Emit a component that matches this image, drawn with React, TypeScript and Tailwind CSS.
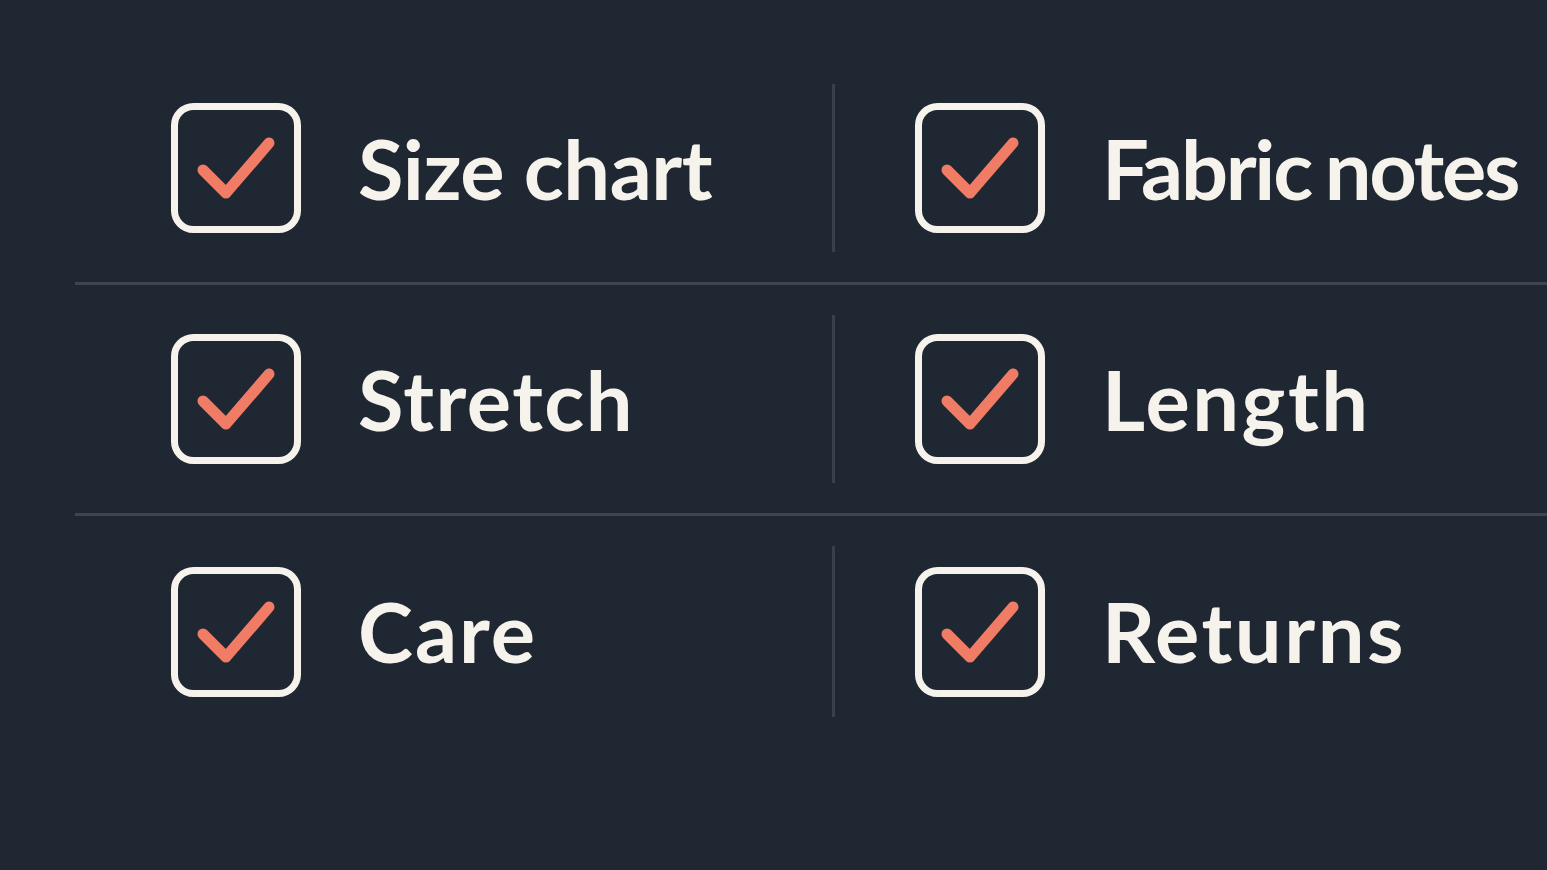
const items = [
  [
    { label: "Size chart", track: "-0.5px", words: "0px" },
    { label: "Fabric notes", track: "-2.3px", words: "-4px" },
  ],
  [
    { label: "Stretch", track: "1.5px", words: "0px" },
    { label: "Length", track: "2.5px", words: "0px" },
  ],
  [
    { label: "Care", track: "2px", words: "0px" },
    { label: "Returns", track: "2.5px", words: "0px" },
  ],
];

function CheckBox() {
  return (
    <svg width="130" height="130" viewBox="0 0 130 130" className="shrink-0">
      <rect x="3.5" y="3.5" width="123" height="123" rx="19" fill="none" stroke="#f6f2ec" strokeWidth="7" />
      <path d="M32 67 L55 90 L98 40" fill="none" stroke="#f07c66" strokeWidth="11" strokeLinecap="round" strokeLinejoin="round" />
    </svg>
  );
}

function Item({ label, track, words }: { label: string; track: string; words: string }) {
  return (
    <div className="flex items-center gap-[57px]">
      <CheckBox />
      <span
        className="text-[83px] font-bold leading-none text-[#f6f2ec] whitespace-nowrap"
        style={{ fontFamily: "Lato, 'Noto Sans', sans-serif", letterSpacing: track, wordSpacing: words }}
      >
        {label}
      </span>
    </div>
  );
}

export default function App() {
  return (
    <div className="w-[1547px] h-[870px] bg-[#1f2733] overflow-hidden pt-[54px] pl-[75px]">
      {items.map((row, i) => (
        <div key={i} className={`flex h-[231px] w-[1500px] ${i < items.length - 1 ? "border-b-[3px] border-[#3d4550]" : ""}`}>
          <div className="w-[757px] pl-[96px] flex items-center">
            <Item {...row[0]} />
          </div>
          <div className="flex items-center py-[30px]">
            <div className="w-[3px] h-full bg-[#38404a]" />
          </div>
          <div className="pl-[80px] flex items-center">
            <Item {...row[1]} />
          </div>
        </div>
      ))}
    </div>
  );
}
